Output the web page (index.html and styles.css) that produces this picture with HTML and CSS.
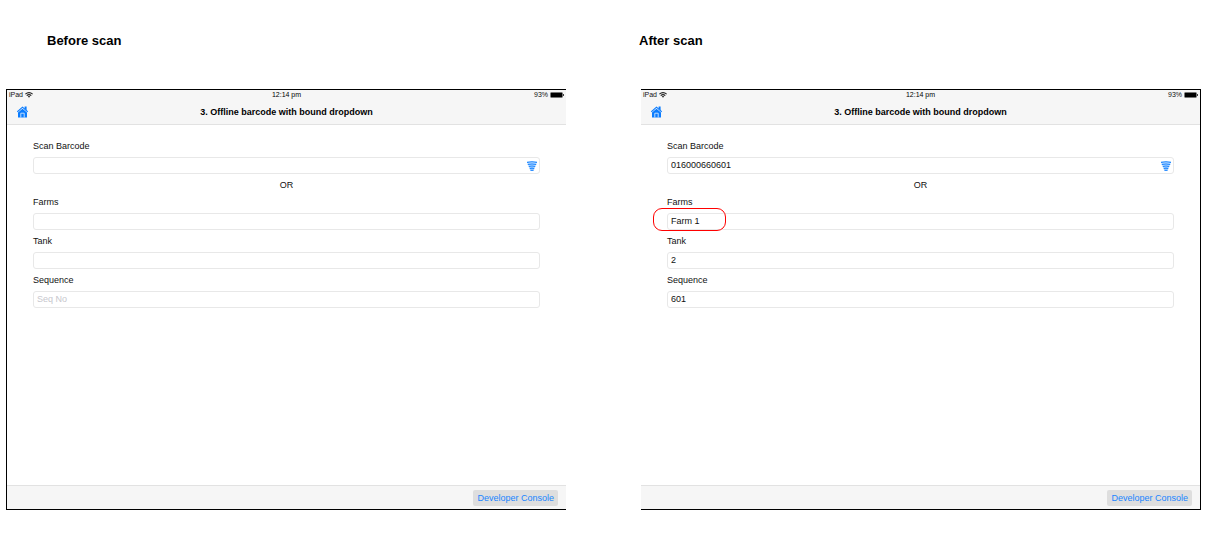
FILE: index.html
```
<!DOCTYPE html>
<html lang="en">
<head>
    <meta charset="UTF-8">
    <meta name="viewport" content="width=device-width, initial-scale=1.0">
    <title>Offline barcode with bound dropdown</title>
    <link rel="stylesheet" href="styles.css">
</head>
<body>
    <!-- shared icons -->
    <svg class="sprite" aria-hidden="true">
        <symbol id="icon-wifi" viewBox="0 0 14 10">
            <path d="M0.6 3.4Q7-1.6 13.4 3.4M3 6Q7 2.8 11 6" fill="none" stroke="#222" stroke-width="2"/>
            <path d="M4.8 7.4Q7 5.8 9.2 7.4L7 10Z" fill="#222"/>
        </symbol>
        <symbol id="icon-battery" viewBox="0 0 14 6">
            <rect x="0.5" y="0.5" width="12" height="5" rx="1" fill="#000" stroke="#777"/>
            <rect x="1" y="1" width="11" height="4" fill="#000"/>
            <rect x="13" y="2" width="1" height="2" fill="#444"/>
        </symbol>
        <symbol id="icon-home" viewBox="0 0 11 12">
            <path d="M0.3 5.8L5.5 1.2L10.7 5.8" fill="none" stroke="#0a7cff" stroke-width="1.1"/>
            <path d="M7.6 0.6H9.6V4.4L7.6 2.6Z" fill="#0a7cff"/>
            <path d="M1 6.6L5.5 2.8L10 6.6V11.5H1Z" fill="#0a7cff"/>
            <path d="M3.8 11.5V7.2H7.2V11.5" fill="none" stroke="#d4e7fc" stroke-width="0.9"/>
        </symbol>
        <symbol id="icon-scan" viewBox="0 0 10 10">
            <path d="M0 1Q5 0 10 1L6.6 10H3.4Z" fill="#b5d8ff"/>
            <path d="M0 1.4Q5 0 10 1.4M0.8 3.5Q5 2.4 9.2 3.5M1.8 5.5Q5 4.6 8.2 5.5M2.8 7.5Q5 6.8 7.2 7.5M3.6 9.4Q5 9 6.4 9.4" fill="none" stroke="#1a85ff" stroke-width="1.1"/>
        </symbol>
    </svg>

    <main class="compare">
        <section class="shot">
            <h2 class="caption caption-before">Before scan</h2>
            <div class="screen screen-before">
                <header class="topbar">
                    <div class="status">
                        <span class="status-left">iPad <svg class="wifi"><use href="#icon-wifi"/></svg></span>
                        <span class="status-time">12:14 pm</span>
                        <span class="status-right">93% <svg class="battery"><use href="#icon-battery"/></svg></span>
                    </div>
                    <div class="nav">
                        <button class="home" type="button" aria-label="Home"><svg><use href="#icon-home"/></svg></button>
                        <h1 class="title">3. Offline barcode with bound dropdown</h1>
                    </div>
                </header>
                <form class="form">
                    <label for="barcode-before">Scan Barcode</label>
                    <div class="field">
                        <input id="barcode-before" type="text">
                        <button class="scan" type="button" aria-label="Scan"><svg><use href="#icon-scan"/></svg></button>
                    </div>
                    <p class="or">OR</p>
                    <label for="farms-before">Farms</label>
                    <div class="field">
                        <select id="farms-before"><option></option></select>
                    </div>
                    <label for="tank-before">Tank</label>
                    <div class="field">
                        <input id="tank-before" type="text">
                    </div>
                    <label for="sequence-before">Sequence</label>
                    <div class="field">
                        <input id="sequence-before" type="text" placeholder="Seq No">
                    </div>
                </form>
                <footer class="bottombar">
                    <button class="console" type="button">Developer Console</button>
                </footer>
            </div>
        </section>

        <section class="shot">
            <h2 class="caption caption-after">After scan</h2>
            <div class="screen screen-after">
                <header class="topbar">
                    <div class="status">
                        <span class="status-left">iPad <svg class="wifi"><use href="#icon-wifi"/></svg></span>
                        <span class="status-time">12:14 pm</span>
                        <span class="status-right">93% <svg class="battery"><use href="#icon-battery"/></svg></span>
                    </div>
                    <div class="nav">
                        <button class="home" type="button" aria-label="Home"><svg><use href="#icon-home"/></svg></button>
                        <h1 class="title">3. Offline barcode with bound dropdown</h1>
                    </div>
                </header>
                <form class="form">
                    <label for="barcode-after">Scan Barcode</label>
                    <div class="field">
                        <input id="barcode-after" type="text" value="016000660601">
                        <button class="scan" type="button" aria-label="Scan"><svg><use href="#icon-scan"/></svg></button>
                    </div>
                    <p class="or">OR</p>
                    <label for="farms-after">Farms</label>
                    <div class="field">
                        <select id="farms-after"><option>Farm 1</option></select>
                        <span class="marker"></span>
                    </div>
                    <label for="tank-after">Tank</label>
                    <div class="field">
                        <input id="tank-after" type="text" value="2">
                    </div>
                    <label for="sequence-after">Sequence</label>
                    <div class="field">
                        <input id="sequence-after" type="text" value="601" placeholder="Seq No">
                    </div>
                </form>
                <footer class="bottombar">
                    <button class="console" type="button">Developer Console</button>
                </footer>
            </div>
        </section>
    </main>
</body>
</html>
```
FILE: styles.css
```
* {
    box-sizing: border-box;
}
body {
    margin: 0;
    background: white;
    color: #111;
    font-family: "Liberation Sans", Arial, sans-serif;
}
button {
    padding: 0;
    border: 0;
    background: none;
    font-family: inherit;
}
svg {
    display: block;
}
.sprite {
    display: none;
}
.compare {
    display: grid;
    grid-template-columns: 1fr 1fr;
    gap: 75px;
    padding: 33px 30px 40px 6px;
}
.caption {
    margin: 0 0 40px;
    font-size: 13px;
    line-height: 16px;
    color: black;
}
.caption-before {
    padding-left: 41px;
}
.caption-after {
    margin-left: -2px;
}

/* iPad screen */
.screen {
    display: flex;
    flex-direction: column;
    border: 1px solid black;
}
.screen-before {
    border-right: 0;
}
.screen-after {
    border-left: 0;
}
.topbar {
    background: #f6f6f6;
    border-bottom: 1px solid #e2e2e2;
}
.status {
    display: grid;
    grid-template-columns: 1fr auto 1fr;
    padding: 0 2px;
    font-size: 7px;
    line-height: 10px;
}
.status-left,
.status-right {
    display: flex;
    align-items: center;
    gap: 2px;
}
.status-right {
    justify-content: flex-end;
}
.status-time {
    color: black;
}
.wifi {
    width: 8px;
    height: 6px;
}
.battery {
    width: 14px;
    height: 6px;
}
.nav {
    display: grid;
    grid-template-columns: 24px 1fr 24px;
    align-items: center;
    height: 24px;
    padding: 0 10px;
}
.home svg {
    width: 11px;
    height: 12px;
}
.title {
    margin: 0;
    font-size: 9px;
    line-height: 12px;
    text-align: center;
    color: black;
}

/* form */
.form {
    flex: 1;
    padding: 15px 26px 172px;
    font-size: 9px;
}
.form label {
    display: block;
    line-height: 12px;
}
.field {
    position: relative;
    display: flex;
    margin: 5px 0;
}
.field input,
.field select {
    flex: 1;
    min-width: 0;
    height: 17px;
    margin: 0;
    padding: 0 3px 1px;
    border: 1px solid #e8e8e8;
    border-radius: 3px;
    background: white;
    color: #111;
    font-family: inherit;
    font-size: 9px;
    appearance: none;
}
.field input::placeholder {
    color: #c7c7cd;
}
.scan {
    position: absolute;
    top: 4px;
    right: 3px;
}
.scan svg {
    width: 10px;
    height: 10px;
}
.or {
    margin: 0 0 5px;
    line-height: 12px;
    text-align: center;
}
.marker {
    position: absolute;
    top: -5px;
    left: -14px;
    width: 73px;
    height: 23px;
    border: 1px solid red;
    border-radius: 9px;
    pointer-events: none;
}

/* bottom bar */
.bottombar {
    display: flex;
    justify-content: flex-end;
    padding: 4px 8px 3px;
    background: #f6f6f6;
    border-top: 1px solid #e2e2e2;
}
.console {
    padding: 0 4px;
    border-radius: 2px;
    background: #dedede;
    color: #1a85ff;
    font-size: 9px;
    line-height: 16px;
}
```
